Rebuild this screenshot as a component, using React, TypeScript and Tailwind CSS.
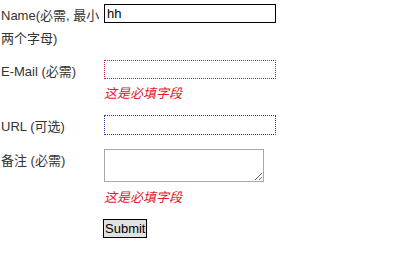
import React from "react";

const font = "font-['Liberation_Sans','Noto_Sans_CJK_SC',sans-serif]";

export default function App() {
  return (
    <div className={`w-[416px] h-[264px] bg-white ${font} text-[13px] text-[#333] pl-[1px]`}>
      <div className="flex items-start pt-[4px]">
        <label className="w-[103px] leading-[23px]">Name(必需, 最小两个字母)</label>
        <input
          readOnly
          value="hh"
          className={`w-[172px] h-[19px] border border-black px-[2px] text-[13px] text-black outline-none ${font}`}
        />
      </div>
      <div className="flex items-start mt-[10px]">
        <label className="w-[103px] leading-[23px]">E-Mail (必需)</label>
        <div className="flex flex-col">
          <input
            readOnly
            value=""
            className="w-[172px] h-[19px] border border-dotted border-[#c0202a] outline-none"
          />
          <span className="mt-[3px] leading-[23px] italic text-[#e0202a]">这是必填字段</span>
        </div>
      </div>
      <div className="flex items-start mt-[10px]">
        <label className="w-[103px] leading-[23px]">URL (可选)</label>
        <input
          readOnly
          value=""
          className="w-[172px] h-[20px] border border-dotted border-[#2c3c8c] rounded-[1px] outline-none"
        />
      </div>
      <div className="flex items-start mt-[11px]">
        <label className="w-[103px] leading-[23px]">备注 (必需)</label>
        <div className="flex flex-col">
          <textarea
            readOnly
            className="w-[160px] h-[33px] border border-[#a9a9a9] outline-none resize"
          />
          <span className="mt-[4px] leading-[23px] italic text-[#e0202a]">这是必填字段</span>
        </div>
      </div>
      <div className="flex mt-[10px] pl-[102px]">
        <button
          className={`h-[19px] px-[1px] border border-black bg-[#e1e1e1] text-[13px] leading-[15px] text-black ${font}`}
        >
          Submit
        </button>
      </div>
    </div>
  );
}
